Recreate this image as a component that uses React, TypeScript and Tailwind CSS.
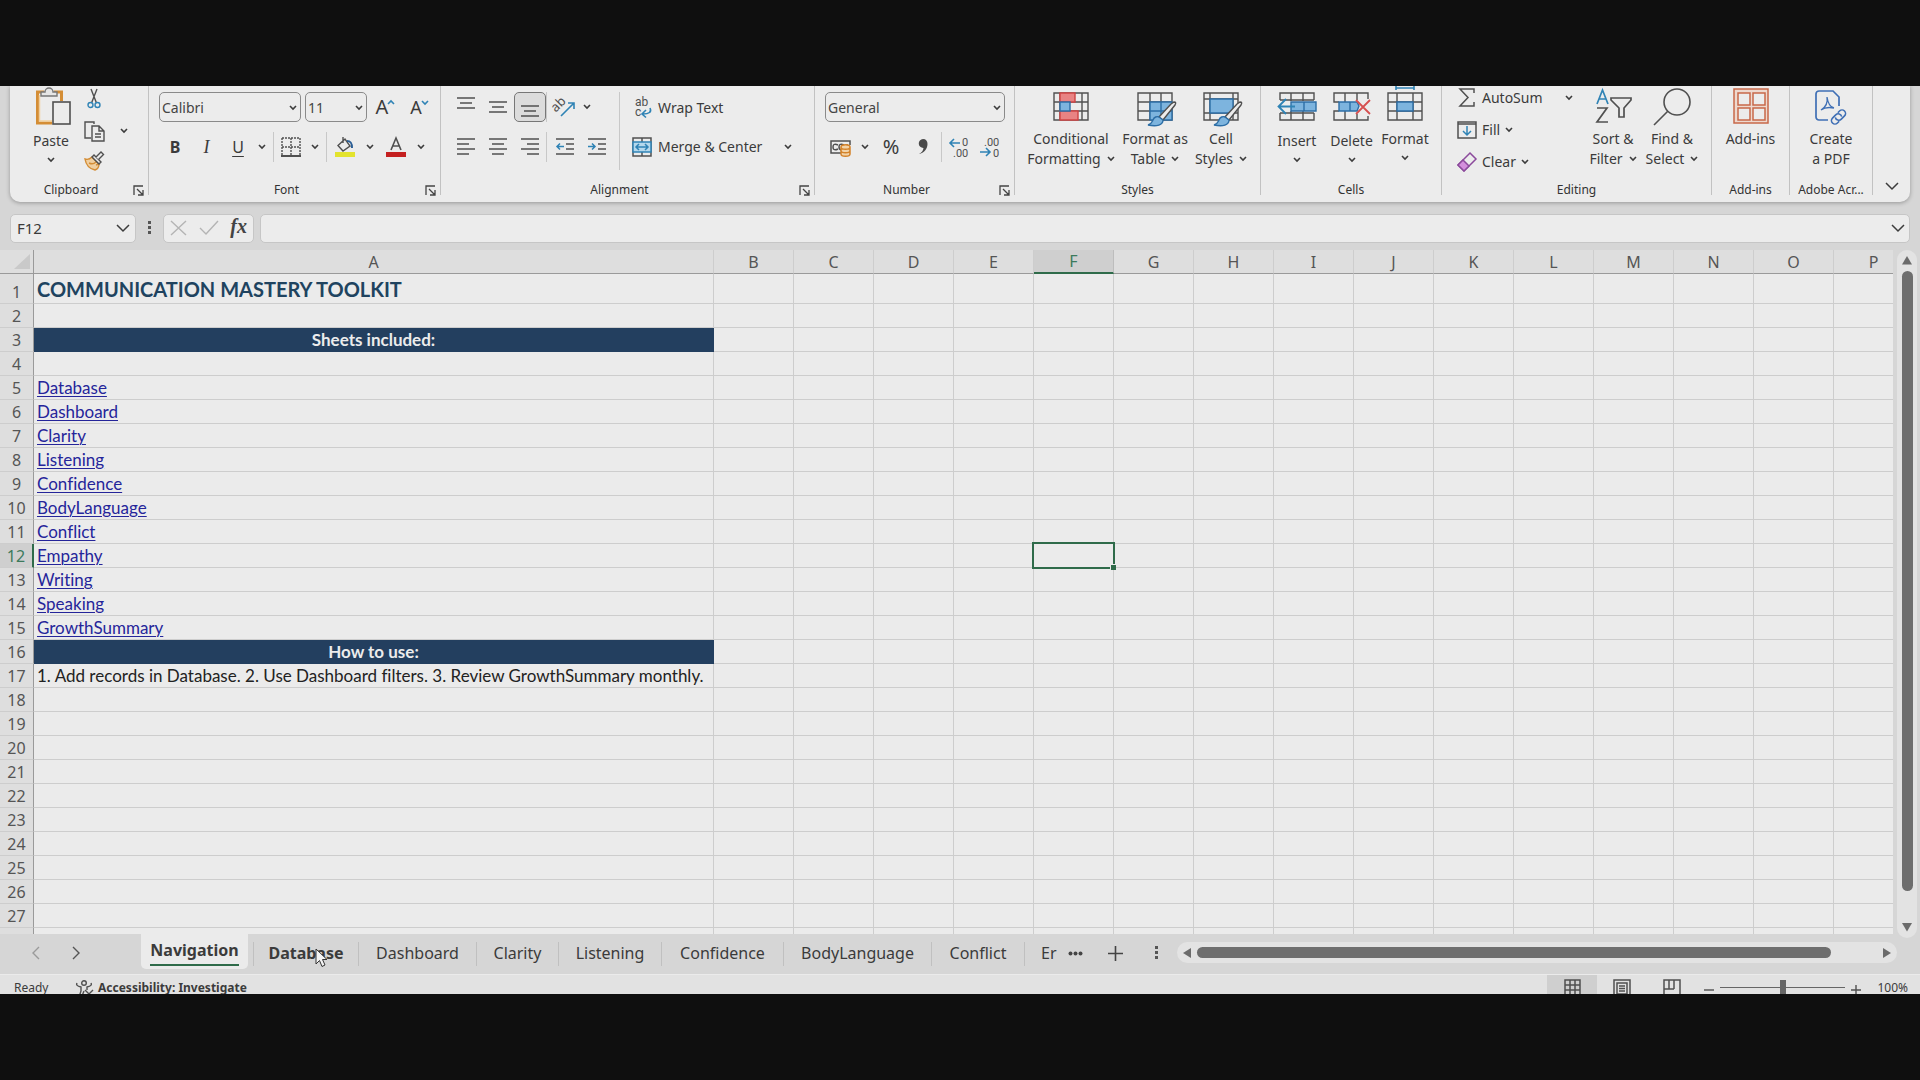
import React from 'react';

const INK = '#505050';
const BLUE = '#2f83b5';
const SKY = '#7db4de';

type IconProps = { w: number; h: number; children: React.ReactNode; stroke?: string; sw?: number; className?: string };

function Icon({ w, h, children, stroke = INK, sw = 1.4, className = '' }: IconProps) {
  return (
    <svg width={w} height={h} viewBox={`0 0 ${w} ${h}`} fill="none" stroke={stroke} strokeWidth={sw} className={`block shrink-0 overflow-visible ${className}`} aria-hidden="true">
      {children}
    </svg>
  );
}

function Chev({ className = '' }: { className?: string }) {
  return (
    <Icon w={8} h={6} stroke="#3c3c3c" sw={1.6} className={className}>
      <path d="M1 1l3 3 3-3" />
    </Icon>
  );
}

function WideChev() {
  return (
    <Icon w={14} h={8} stroke="#3c3c3c" sw={1.5}>
      <path d="M1 1l6 6 6-6" />
    </Icon>
  );
}

/* ---------- ribbon building blocks ---------- */

function Btn({ label, className = 'w-8', children }: { label: string; className?: string; children: React.ReactNode }) {
  return (
    <button type="button" aria-label={label} className={`flex h-[30px] shrink-0 items-center justify-center ${className}`}>
      {children}
    </button>
  );
}

function BigBtn({ className, icon, lines, drop, low }: { className: string; icon: React.ReactNode; lines: string[]; drop?: 'inline' | 'below'; low?: boolean }) {
  return (
    <button type="button" className={`flex shrink-0 flex-col items-center ${className}`}>
      <span className={low ? 'flex h-[45px] flex-col items-center' : 'flex h-[43px] flex-col items-center'}>{icon}</span>
      {lines.map((line, i) => (
        <span key={line} className="flex h-5 items-center gap-1.5 whitespace-nowrap leading-5">
          {line}
          {drop === 'inline' && i === lines.length - 1 && <Chev />}
        </span>
      ))}
      {drop === 'below' && (
        <span className="flex h-[18px] items-center">
          <Chev />
        </span>
      )}
    </button>
  );
}

function Group({ title, className, launcher, children }: { title: string; className: string; launcher?: boolean; children: React.ReactNode }) {
  return (
    <section aria-label={title} className={`flex h-[109px] shrink-0 border-r border-[#c2c2c2] ${className}`}>
      <div className="flex h-[116px] min-w-0 flex-1 flex-col">
        <div className="min-h-0 flex-1">{children}</div>
        <div className={`relative flex h-6 items-center justify-center text-xs leading-4 text-[#333] ${launcher ? 'pr-4' : ''}`}>
          <span className="whitespace-nowrap">{title}</span>
          {launcher && (
            <button type="button" aria-label={`${title} settings`} className="absolute right-1 top-[7px]">
              <Icon w={11} h={11} stroke="#444" sw={1.3}>
                <path d="M1 10V1h9M4 4l5.5 5.5M10 5v5H5" />
              </Icon>
            </button>
          )}
        </div>
      </div>
    </section>
  );
}

function Split({ className = 'h-[30px]' }: { className?: string }) {
  return <span className={`w-px shrink-0 bg-[#c8c8c8] ${className}`} />;
}

function Combo({ label, options, className }: { label: string; options: string[]; className: string }) {
  return (
    <div className={`relative h-[30px] shrink-0 ${className}`}>
      <select aria-label={label} className="h-full w-full appearance-none rounded-[5px] border border-[#8a8a8a] bg-[#ececec] pl-0.5 pt-0.5 text-sm text-[#444]">
        {options.map((o) => (
          <option key={o}>{o}</option>
        ))}
      </select>
      <span className="pointer-events-none absolute right-1 top-[13px]">
        <Chev />
      </span>
    </div>
  );
}

/* ---------- icons ---------- */

function Lines({ rows }: { rows: [number, number, number][] }) {
  return (
    <Icon w={18} h={18} sw={1.5}>
      {rows.map(([y, a, b]) => (
        <path key={y} d={`M${a} ${y}H${b}`} />
      ))}
    </Icon>
  );
}

const PasteIcon = (
  <Icon w={36} h={38} className="ml-1 mt-0.5">
    <path d="M9 4H2.500v31H17M19 4h7.500v9" stroke="#d48d35" strokeWidth="3" />
    <path d="M4.500 7v26H17" stroke="#f1cf9c" strokeWidth="1.500" />
    <path d="M6 8V4h4a4 4 0 0 1 8 0h4v4z" fill="#e6e6e6" stroke="#777" />
    <rect x="18" y="14" width="17" height="22" fill="#ececec" strokeWidth="1.600" />
  </Icon>
);

const ScissorsIcon = (
  <Icon w={14} h={20}>
    <path d="M4 0l5.500 14M10 0L4.500 14" />
    <circle cx="3.500" cy="16" r="2.500" stroke={BLUE} />
    <circle cx="10.500" cy="16" r="2.500" stroke={BLUE} />
  </Icon>
);

const CopyIcon = (
  <Icon w={21} h={21}>
    <path d="M7 17H1V1h9v2" />
    <path d="M8 5h7l5 5v10H8zM15 5v5h5M11 13h6M11 16h6" />
  </Icon>
);

const BrushIcon = (
  <Icon w={21} h={20}>
    <path d="M1 8c3 1 5 0 7-2l7 7c0 3-1 5-4 6C6 18 2 14 1 8z" stroke="#d48d35" fill="#f0cfa0" />
    <path d="M5 12c2 1 5 1 7-1M8 6l7 7-3 1" stroke="#d48d35" />
    <path d="M8 6l2-2 7 7-2 2z" fill="#ececec" />
    <path d="M12 6l5-5 2.500 2.500-5 5" fill="#ececec" />
  </Icon>
);

function GridIcon({ children }: { children?: React.ReactNode }) {
  return (
    <Icon w={36} h={36} className="mt-1.5">
      <path d="M1 1h34v27H1zM1 10h34M1 19h34M13 1v27M24 1v27" />
      {children}
    </Icon>
  );
}

const brush = (
  <>
    <path d="M37 10c2 0 2 1 1 3L26 28l-4-3 12-13z" fill="#ececec" />
    <path d="M22 25l4 3c0 5-6 7-15 5 4-1 4-3 5-5 1-3 4-4 6-3z" fill={SKY} stroke="#2c6ea6" />
  </>
);

const CondIcon = (
  <Icon w={36} h={30} className="mt-1.5">
    <path d="M1 1h34v27H1zM1 10h34M1 19h34M7 1v27M29 1v27" />
    <path d="M7 1h15v9H7zM7 19h18v9H7z" fill="#e88383" stroke="#cf4444" />
    <path d="M7 10h10v9H7z" fill={SKY} stroke="#2c6ea6" />
  </Icon>
);

const TableIcon = (
  <GridIcon>
    <path d="M13 10h22v18H13z" fill={SKY} stroke="#2c6ea6" />
    <path d="M24 10v18M13 19h22" stroke="#2c6ea6" />
    {brush}
  </GridIcon>
);

const CellStylesIcon = (
  <Icon w={36} h={36} className="mt-1.5">
    <path d="M1 1h34v27H1zM1 7h34M1 21h34M7 1v27M30 1v27" />
    <path d="M7 7h23v14H7z" fill={SKY} stroke="#2c6ea6" />
    {brush}
  </Icon>
);

const InsertIcon = (
  <Icon w={40} h={30} className="mt-1.5">
    <path d="M3 8V1h34v7M3 21v7h34v-7M14 1v8M26 1v8M14 19v9M26 19v9M3 8h34M3 21h34" />
    <path d="M14 10h25v9H14z" fill={SKY} stroke="#2c6ea6" />
    <path d="M27 10v9" stroke="#2c6ea6" />
    <path d="M18 14.500H2M9 7l-7.500 7.500L9 22" stroke={BLUE} strokeWidth="1.800" />
  </Icon>
);

const DeleteIcon = (
  <Icon w={38} h={30} className="mt-1.5">
    <path d="M6 10H1V1h34v6M6 19H1v9h34v-4M12 1v9M24 1v7M12 19v9M24 22v6" />
    <path d="M6 10h18l2 4-2 5H6z" fill={SKY} stroke="#2c6ea6" />
    <path d="M17 10v9" stroke="#2c6ea6" />
    <path d="M23 8l14 14M37 8L23 22" stroke="#d65050" strokeWidth="1.800" />
  </Icon>
);

const FormatIcon = (
  <Icon w={36} h={34} className="mt-0.5">
    <path d="M9 0h18M9-2v4M27-2v4" stroke={BLUE} strokeWidth="1.600" />
    <path d="M1 5h34v27H1zM1 14h34M1 23h34M10 5v27M26 5v27" />
    <path d="M10 14h16v9H10z" fill={SKY} stroke="#2c6ea6" />
  </Icon>
);

const SortIcon = (
  <Icon w={37} h={38} className="mt-0.5" sw={1.7}>
    <path d="M2 16L7.500 2 13 16M4 11h7" stroke={BLUE} />
    <path d="M2 20h10L2 34h11" />
    <path d="M16 10h20v2l-7 8v9h-5v-9l-8-8z" />
  </Icon>
);

const FindIcon = (
  <Icon w={38} h={38} className="mt-0.5" sw={1.6}>
    <circle cx="24" cy="14" r="13" />
    <path d="M15 23L1 37" />
  </Icon>
);

const AddinsIcon = (
  <Icon w={36} h={38} className="mt-0.5" stroke="#c7684a" sw={1.5}>
    <rect x="1" y="1" width="34" height="34" fill="#eed9cf" />
    <path d="M5 5h12v12H5zM20 5h12v12H20zM5 20h12v12H5zM20 20h12v12H20z" fill="#ececec" />
  </Icon>
);

const PdfIcon = (
  <Icon w={33} h={37} className="mt-1" stroke="#3f6fb5" sw={1.7}>
    <path d="M13 30H4a3 3 0 0 1-3-3V4a3 3 0 0 1 3-3h14l6 6v9" />
    <path d="M6 20c5-3 7-7 6-13 1 7 3 10 7 11-5-1-9-1-13 2z" strokeWidth="1.300" />
    <g transform="rotate(-45 23.500 27)" strokeWidth="1.600">
      <path d="M21 30.500h-2.500a3.500 3.500 0 0 1 0-7H23a3.500 3.500 0 0 1 3 5.500" />
      <path d="M26 23.500h2.500a3.500 3.500 0 0 1 0 7H24a3.500 3.500 0 0 1-3-5.500" />
    </g>
  </Icon>
);

/* ---------- sheet data ---------- */

const COLS = ['B', 'C', 'D', 'E', 'F', 'G', 'H', 'I', 'J', 'K', 'L', 'M', 'N', 'O', 'P'];
const LINKS = ['Database', 'Dashboard', 'Clarity', 'Listening', 'Confidence', 'BodyLanguage', 'Conflict', 'Empathy', 'Writing', 'Speaking', 'GrowthSummary'];
const ROWS = Array.from({ length: 28 }, (_, i) => i + 1);

function CellA({ row }: { row: number }) {
  if (row === 1) {
    return <td className="border-b border-r border-[#cdcdcd] pl-[3px] text-xl font-bold leading-7 text-[#20435f]">COMMUNICATION MASTERY TOOLKIT</td>;
  }
  if (row === 3 || row === 16) {
    return (
      <td className="border-b border-r border-[#233f5f] bg-[#233f5f] text-center font-bold leading-5 text-[#ececec]">
        {row === 3 ? 'Sheets included:' : 'How to use:'}
      </td>
    );
  }
  const name = LINKS[row - 5];
  return (
    <td className="whitespace-nowrap border-b border-r border-[#cdcdcd] pl-[3px] leading-5 text-[#222]">
      {name && (
        <a href={`#${name}`} className="text-[#25259a] underline decoration-1 underline-offset-2">
          {name}
        </a>
      )}
      {row === 17 && '1. Add records in Database. 2. Use Dashboard filters. 3. Review GrowthSummary monthly.'}
    </td>
  );
}

function Sheet() {
  return (
    <table className="w-[1913px] table-fixed border-separate border-spacing-0 font-['Lato',sans-serif] text-[17px] [font-variant-ligatures:none]">
      <colgroup>
        <col className="w-[34px]" />
        <col className="w-[680px]" />
        {COLS.map((c) => (
          <col key={c} className="w-20" />
        ))}
      </colgroup>
      <thead className="font-['Noto_Sans',sans-serif] text-base text-[#555]">
        <tr className="h-6">
          <th aria-label="Select all" className="border-b border-r border-[#9a9a9a] bg-[#dedede] p-0">
            <Icon w={16} h={15} stroke="none" className="ml-auto mr-[3px]">
              <path d="M16 0v15H0z" fill="#c9c9c9" />
            </Icon>
          </th>
          <th scope="col" className="border-b border-r border-b-[#9a9a9a] border-r-[#cdcdcd] bg-[#dedede] p-0 font-normal leading-5">A</th>
          {COLS.map((c) => (
            <th
              key={c}
              scope="col"
              className={
                c === 'F'
                  ? 'border-b-2 border-r border-b-[#2f6b4a] border-r-[#bdbdbd] bg-[#cfcfcf] p-0 font-normal leading-5 text-[#3c7a5c]'
                  : 'border-b border-r border-b-[#9a9a9a] border-r-[#cdcdcd] bg-[#dedede] p-0 font-normal leading-5'
              }
            >
              {c}
            </th>
          ))}
        </tr>
      </thead>
      <tbody>
        {ROWS.map((r) => (
          <tr key={r} className={r === 1 ? 'h-[30px]' : 'h-6'}>
            <th
              scope="row"
              className={
                r === 12
                  ? "border-b border-r-2 border-b-[#cdcdcd] border-r-[#2f6b4a] bg-[#cfcfcf] p-0 text-center align-bottom font-['Noto_Sans',sans-serif] text-base font-normal leading-[22px] text-[#3c7a5c]"
                  : "border-b border-r border-b-[#cdcdcd] border-r-[#9a9a9a] bg-[#dedede] p-0 text-center align-bottom font-['Noto_Sans',sans-serif] text-base font-normal leading-[22px] text-[#555]"
              }
            >
              {r}
            </th>
            <CellA row={r} />
            {COLS.map((c) => (
              <td key={c} className="relative border-b border-r border-[#cdcdcd] p-0">
                {c === 'F' && r === 12 && (
                  <span className="absolute -bottom-0.5 -left-0.5 -right-0.5 -top-0.5 z-10 border-2 border-[#2f6b4a]">
                    <span className="absolute -bottom-[3px] -right-[3px] h-1.5 w-1.5 border-l border-t border-[#ececec] bg-[#2f6b4a]" />
                  </span>
                )}
              </td>
            ))}
          </tr>
        ))}
      </tbody>
    </table>
  );
}

function Tab({ name, className }: { name: string; className: string }) {
  return (
    <button type="button" className={`my-2 shrink-0 border-l border-[#c0c0c0] pb-0.5 leading-[22px] ${className}`}>
      {name}
    </button>
  );
}

export default function App() {
  return (
    <div className="flex h-screen flex-col overflow-hidden bg-[#0f0f0f] py-[86px] font-['Noto_Sans',sans-serif] text-sm text-[#3b3b3b]">
      <div className="flex min-h-0 flex-1 flex-col overflow-hidden bg-[#d6d6d6]">
        {/* Ribbon */}
        <div className="mx-2.5 flex h-[116px] shrink-0 rounded-b-[10px] bg-[#ececec] shadow-[0_1px_4px_rgba(0,0,0,0.3)]">
          <Group title="Clipboard" className="w-[139px] pl-0" launcher>
            <div className="flex pl-2">
              <BigBtn className="w-[66px]" icon={PasteIcon} lines={['Paste']} drop="below" low />
              <div className="flex flex-col">
                <Btn label="Cut" className="h-[26px] w-5 pb-1">{ScissorsIcon}</Btn>
                <div className="flex items-center">
                  <Btn label="Copy" className="h-8 w-5">{CopyIcon}</Btn>
                  <Btn label="Copy options" className="ml-3.5 w-3"><Chev /></Btn>
                </div>
                <Btn label="Format painter" className="w-5">{BrushIcon}</Btn>
              </div>
            </div>
          </Group>

          <Group title="Font" className="w-[292px]" launcher>
            <div className="flex flex-col gap-2.5 pl-2.5 pt-1.5">
              <div className="flex">
                <Combo label="Font name" options={['Calibri', 'Arial']} className="w-[142px]" />
                <Combo label="Font size" options={['11', '12']} className="ml-1 w-[62px]" />
                <Btn label="Increase font size" className="w-9">
                  <span className="text-xl leading-6">A</span>
                  <Icon w={6} h={16} stroke={BLUE} sw={1.6}><path d="M0 5l3-3 3 3" /></Icon>
                </Btn>
                <Btn label="Decrease font size">
                  <span className="text-lg leading-6">A</span>
                  <Icon w={6} h={16} stroke={BLUE} sw={1.6}><path d="M0 2l3 3 3-3" /></Icon>
                </Btn>
              </div>
              <div className="flex">
                <Btn label="Bold"><span className="text-base font-bold">B</span></Btn>
                <Btn label="Italic" className="w-[31px]"><span className="font-['Liberation_Serif',serif] text-lg italic">I</span></Btn>
                <Btn label="Underline"><span className="text-base underline underline-offset-[3px]">U</span></Btn>
                <Btn label="Underline options" className="w-[15px]"><Chev /></Btn>
                <Split className="ml-1 h-[30px]" />
                <Btn label="Borders" className="w-[34px]">
                  <Icon w={20} h={20} sw={1.4}>
                    <path d="M1 1h18v17M1 1v17M10 1v17M1 10h18" strokeDasharray="2 1" />
                    <path d="M0 19h20" strokeWidth="2" />
                  </Icon>
                </Btn>
                <Btn label="Border options" className="w-[14px]"><Chev /></Btn>
                <Split className="ml-1 h-[30px]" />
                <Btn label="Fill color" className="w-9">
                  <Icon w={20} h={20}>
                    <path d="M3 8.500l7-6.500 5 7-7 5zM8 0v6" />
                    <path d="M12 4c4 0 5 2 5 7" stroke="#2c5f96" strokeWidth="2" />
                    <path d="M0 17.500h20" stroke="#e3e32d" strokeWidth="5" />
                  </Icon>
                </Btn>
                <Btn label="Fill options" className="w-[14px]"><Chev /></Btn>
                <Btn label="Font color" className="ml-1.5 w-[26px]">
                  <Icon w={20} h={20} sw={1.6}>
                    <path d="M5 13L10 1l5 12M7 9h6" />
                    <path d="M0 17.500h20" stroke="#c42020" strokeWidth="5" />
                  </Icon>
                </Btn>
                <Btn label="Font color options" className="ml-1 w-4"><Chev /></Btn>
              </div>
            </div>
          </Group>

          <Group title="Alignment" className="w-[374px]" launcher>
            <div className="flex pl-[9px] pt-1.5">
              <div className="flex flex-col gap-2.5">
                <div className="flex">
                  <Btn label="Top align" className="w-8 pb-1.5"><Lines rows={[[3, 0, 18], [8, 3, 15], [13, 0, 18]]} /></Btn>
                  <Btn label="Middle align"><Lines rows={[[4, 0, 18], [9, 3, 15], [14, 0, 18]]} /></Btn>
                  <Btn label="Bottom align" className="w-8 rounded-[5px] border border-[#777] bg-[#dcdcdc] pt-2"><Lines rows={[[4, 0, 18], [9, 3, 15], [14, 0, 18]]} /></Btn>
                  <Split />
                  <Btn label="Orientation" className="w-[34px]">
                    <Icon w={21} h={20}>
                      <g transform="rotate(-45 6 10)">
                        <text x="-1" y="11" fontSize="13" fill={INK} stroke="none">ab</text>
                      </g>
                      <path d="M7 19L20 6M14 6h6v6" stroke={BLUE} strokeWidth="1.600" />
                    </Icon>
                  </Btn>
                  <Btn label="Orientation options" className="w-3"><Chev /></Btn>
                </div>
                <div className="flex">
                  <Btn label="Align left"><Lines rows={[[1, 0, 18], [6, 0, 12], [11, 0, 18], [16, 0, 12]]} /></Btn>
                  <Btn label="Center"><Lines rows={[[1, 0, 18], [6, 3, 15], [11, 0, 18], [16, 3, 15]]} /></Btn>
                  <Btn label="Align right"><Lines rows={[[1, 0, 18], [6, 6, 18], [11, 0, 18], [16, 6, 18]]} /></Btn>
                  <Split />
                  <Btn label="Decrease indent" className="w-9">
                    <Icon w={18} h={18} sw={1.5}>
                      <path d="M0 1h18M10 6h8M10 11h8M0 16h18" />
                      <path d="M8 8.500H1M4 5.500l-3 3 3 3" stroke={BLUE} />
                    </Icon>
                  </Btn>
                  <Btn label="Increase indent" className="w-7">
                    <Icon w={18} h={18} sw={1.5}>
                      <path d="M0 1h18M10 6h8M10 11h8M0 16h18" />
                      <path d="M0 8.500h7M4 5.500l3 3-3 3" stroke={BLUE} />
                    </Icon>
                  </Btn>
                </div>
              </div>
              <Split className="ml-2 h-[78px]" />
              <div className="flex flex-col gap-2.5 pl-3">
                <button type="button" className="flex h-[30px] items-center gap-1.5 pt-0.5">
                  <Icon w={20} h={20} className="font-['Roboto',sans-serif]">
                    <text x="3" y="8" fontSize="12" fill={INK} stroke="none">ab</text>
                    <text x="3" y="18" fontSize="12" fill={INK} stroke="none">c</text>
                    <path d="M18 10c2 4-1 6-7 6M14 12l-4 4 4 3.500" stroke={BLUE} strokeWidth="1.600" />
                  </Icon>
                  Wrap Text
                </button>
                <div className="flex">
                  <button type="button" className="flex h-[30px] items-center gap-1.5 whitespace-nowrap">
                    <Icon w={20} h={20} sw={1.5}>
                      <path d="M1 1h18v18H1zM10 1v4M10 15v4" />
                      <path d="M1 5h18v10H1z" fill="#b5d8ec" stroke={BLUE} />
                      <path d="M4 10h12M7 7l-3 3 3 3M13 7l3 3-3 3" stroke={BLUE} />
                    </Icon>
                    Merge &amp; Center
                  </button>
                  <Btn label="Merge options" className="ml-[18px] w-4"><Chev /></Btn>
                </div>
              </div>
            </div>
          </Group>

          <Group title="Number" className="w-[200px]" launcher>
            <div className="flex flex-col gap-2.5 pl-2.5 pt-1.5">
              <Combo label="Number format" options={['General', 'Number', 'Currency']} className="w-[180px]" />
              <div className="flex pl-[3px]">
                <Btn label="Accounting format" className="w-[26px]">
                  <Icon w={22} h={20} sw={1.5}>
                    <path d="M20 8V4H1v12h11" />
                    <path d="M8 8c-4-2-5 0-5 2s1 4 5 2M14 8c-4-2-5 0-5 2s1 3 3 3M17 7v2" />
                    <path d="M11 10v7c0 3 9 3 9 0v-7c0-3-9-3-9 0c0 3 9 3 9 0M11 13.500c0 3 9 3 9 0" fill="#f2d3a8" stroke="#d4832a" />
                  </Icon>
                </Btn>
                <Btn label="Accounting options" className="ml-[3px] w-4"><Chev /></Btn>
                <Btn label="Percent style" className="w-9"><span className="text-xl">%</span></Btn>
                <Btn label="Comma style" className="w-7">
                  <Icon w={10} h={16} stroke="none">
                    <path d="M5 0a4.500 4.500 0 1 0 .5 9C5 12 4 13.500 1 15c5-1 8.500-5 8.500-10C9.500 2 8 0 5 0z" fill="#4a4a4a" />
                  </Icon>
                </Btn>
                <Split className="ml-1 h-[30px]" />
                <Btn label="Increase decimal" className="w-[34px]">
                  <Icon w={20} h={21} stroke={BLUE} className="font-['Roboto',sans-serif]">
                    <text x="13" y="9" fontSize="11" fill={INK} stroke="none">0</text>
                    <text x="4" y="20" fontSize="11" fill={INK} stroke="none">.00</text>
                    <path d="M11 6H1M5 2L1 6l4 4" strokeWidth="1.600" />
                  </Icon>
                </Btn>
                <Btn label="Decrease decimal" className="w-7">
                  <Icon w={20} h={21} stroke={BLUE} className="font-['Roboto',sans-serif]">
                    <text x="4" y="9" fontSize="11" fill={INK} stroke="none">.00</text>
                    <text x="13" y="20" fontSize="11" fill={INK} stroke="none">0</text>
                    <path d="M0 15h10M6 11l4 4-4 4" strokeWidth="1.600" />
                  </Icon>
                </Btn>
              </div>
            </div>
          </Group>

          <Group title="Styles" className="w-[246px]">
            <div className="flex pl-2">
              <BigBtn className="w-[96px]" icon={CondIcon} lines={['Conditional', 'Formatting']} drop="inline" />
              <BigBtn className="w-[72px]" icon={TableIcon} lines={['Format as', 'Table']} drop="inline" />
              <BigBtn className="w-[60px]" icon={CellStylesIcon} lines={['Cell', 'Styles']} drop="inline" />
            </div>
          </Group>

          <Group title="Cells" className="w-[181px]">
            <div className="flex items-start pl-2">
              <BigBtn className="w-[56px]" icon={InsertIcon} lines={['Insert']} drop="below" low />
              <BigBtn className="w-[53px]" icon={DeleteIcon} lines={['Delete']} drop="below" low />
              <BigBtn className="w-[54px]" icon={FormatIcon} lines={['Format']} drop="below" />
            </div>
          </Group>

          <Group title="Editing" className="w-[270px]">
            <div className="flex pl-[15px]">
              <div className="flex w-[128px] flex-col">
                <div className="flex h-7 items-center pb-1">
                  <button type="button" className="flex items-center gap-[5px]">
                    <Icon w={20} h={20} sw={1.5}>
                      <path d="M17 5V1H3l8 8.500L3 18h14v-4" />
                    </Icon>
                    AutoSum
                  </button>
                  <Btn label="AutoSum options" className="ml-[18px] w-4"><Chev /></Btn>
                </div>
                <button type="button" className="flex h-8 items-center gap-[5px]">
                  <Icon w={20} h={18} sw={1.5}>
                    <path d="M1 1h18v16H1zM1 3h18" />
                    <path d="M10 5v9M6 10l4 4 4-4" stroke={BLUE} />
                  </Icon>
                  Fill
                  <Chev />
                </button>
                <button type="button" className="flex h-8 items-center gap-[5px]">
                  <Icon w={20} h={20} stroke="#8c4a9c" sw={1.5}>
                    <path d="M13 1l6 6L7 19l-6-6z" />
                    <path d="M6 8l6 6-5 5-6-6z" fill="#d48fdc" />
                  </Icon>
                  Clear
                  <Chev />
                </button>
              </div>
              <BigBtn className="w-[56px]" icon={SortIcon} lines={['Sort &', 'Filter']} drop="inline" />
              <BigBtn className="w-[62px]" icon={FindIcon} lines={['Find &', 'Select']} drop="inline" />
            </div>
          </Group>

          <Group title="Add-ins" className="w-[78px]">
            <BigBtn className="w-full" icon={AddinsIcon} lines={['Add-ins']} />
          </Group>

          <Group title="Adobe Acr..." className="w-[83px]">
            <BigBtn className="w-full" icon={PdfIcon} lines={['Create', 'a PDF']} />
          </Group>

          <div className="flex flex-1 items-end justify-center pb-2.5">
            <button type="button" aria-label="Ribbon display options" className="p-0.5"><WideChev /></button>
          </div>
        </div>

        {/* Formula bar */}
        <div className="flex h-12 shrink-0 items-center px-2.5 pt-1">
          <div className="flex h-[29px] w-[126px] items-center rounded-[5px] border border-[#c6c6c6] bg-[#ececec] pr-[5px]">
            <input aria-label="Name box" defaultValue="F12" className="min-w-0 flex-1 bg-transparent pl-1.5 text-[15px] leading-5 outline-none" />
            <button type="button" aria-label="Name box list"><WideChev /></button>
          </div>
          <Icon w={4} h={14} stroke="none" className="ml-3">
            <path d="M0 0h3v3H0zM0 5h3v3H0zM0 10h3v3H0z" fill="#555" />
          </Icon>
          <div className="ml-[11px] flex h-[29px] w-[91px] items-center justify-between rounded-[5px] border border-[#c6c6c6] bg-[#ececec] px-1.5">
            <button type="button" aria-label="Cancel">
              <Icon w={17} h={16} stroke="#b4b4b4"><path d="M1 1l15 14M16 1L1 15" /></Icon>
            </button>
            <button type="button" aria-label="Enter">
              <Icon w={20} h={16} stroke="#b4b4b4"><path d="M1 8l6 6L19 1" /></Icon>
            </button>
            <button type="button" aria-label="Insert function" className="pb-1 font-['Liberation_Serif',serif] text-xl font-bold italic leading-6 text-[#444]">fx</button>
          </div>
          <div className="ml-1.5 flex h-[29px] flex-1 items-center rounded-[5px] border border-[#c6c6c6] bg-[#ececec] pr-1">
            <input aria-label="Formula bar" className="min-w-0 flex-1 bg-transparent px-2 outline-none" />
            <button type="button" aria-label="Expand formula bar"><WideChev /></button>
          </div>
        </div>

        {/* Worksheet */}
        <div className="flex min-h-0 flex-1">
          <div className="min-w-0 flex-1 overflow-hidden bg-[#ebebeb]">
            <Sheet />
          </div>
          <div className="-mb-1 ml-1 mr-[3px] flex w-5 shrink-0 flex-col items-center rounded-[10px] bg-[#e3e3e3] py-1.5">
            <Icon w={10} h={9} stroke="none"><path d="M5 0l5 8.500H0z" fill="#6b6b6b" /></Icon>
            <div className="mb-8 mt-1.5 w-[11px] flex-1 rounded-full bg-[#6e6e6e]" />
            <Icon w={10} h={9} stroke="none"><path d="M5 8.500L0 0h10z" fill="#6b6b6b" /></Icon>
          </div>
        </div>

        {/* Sheet tabs */}
        <div className="flex h-10 shrink-0 text-base">
          <Btn label="Previous sheet" className="ml-5 h-[38px] w-8">
            <Icon w={8} h={14} stroke="#9a9a9a"><path d="M7 1L1 7l6 6" /></Icon>
          </Btn>
          <Btn label="Next sheet" className="ml-2 h-[38px] w-8">
            <Icon w={8} h={14} stroke="#555"><path d="M1 1l6 6-6 6" /></Icon>
          </Btn>
          <div className="ml-[49px] flex h-[35px] w-[107px] shrink-0 justify-center rounded-b-[5px] bg-[#ebebeb]">
            <button type="button" className="mb-[3px] border-b-2 border-[#2f6b4a] pt-0.5 font-bold leading-6">Navigation</button>
          </div>
          <div className="relative ml-[5px] flex shrink-0">
            <Tab name="Database" className="w-[105px] font-bold" />
            <Icon w={13} h={20} sw={1} stroke="#333" className="absolute left-[62px] top-[14px]">
              <path d="M1 1v15l3.500-3.500L7 18.500l3-1.500-2.500-5.500H12z" fill="#f4f4f4" />
            </Icon>
          </div>
          <Tab name="Dashboard" className="w-[118px]" />
          <Tab name="Clarity" className="w-[82px]" />
          <Tab name="Listening" className="w-[103px]" />
          <Tab name="Confidence" className="w-[122px]" />
          <Tab name="BodyLanguage" className="w-[148px]" />
          <Tab name="Conflict" className="w-[93px]" />
          <Tab name="Er" className="w-8 pl-4 text-left" />
          <Btn label="More sheets" className="ml-[3px] h-[38px] w-8">
            <Icon w={15} h={5} stroke="none">
              <circle cx="2.500" cy="2.500" r="2" fill="#444" />
              <circle cx="7.500" cy="2.500" r="2" fill="#444" />
              <circle cx="12.500" cy="2.500" r="2" fill="#444" />
            </Icon>
          </Btn>
          <Btn label="New sheet" className="ml-1.5 h-[38px] w-9">
            <Icon w={15} h={15} stroke="#444" sw={1.6}><path d="M7.500 0v15M0 7.500h15" /></Icon>
          </Btn>
          <Icon w={4} h={14} stroke="none" className="ml-[22px] mt-3">
            <path d="M0 0h3v3H0zM0 5h3v3H0zM0 10h3v3H0z" fill="#555" />
          </Icon>
          <div className="ml-[18px] mr-[23px] mt-2 flex h-[21px] flex-1 items-center rounded-full bg-[#e3e3e3] px-1.5">
            <Icon w={8} h={10} stroke="none"><path d="M0 5l8-5v10z" fill="#6b6b6b" /></Icon>
            <div className="ml-1.5 mr-[52px] h-[11px] flex-1 rounded-full bg-[#6e6e6e]" />
            <Icon w={8} h={10} stroke="none"><path d="M8 5L0 0v10z" fill="#6b6b6b" /></Icon>
          </div>
        </div>

        {/* Status bar */}
        <div className="flex h-5 shrink-0 overflow-hidden border-t border-[#ebebeb] bg-[#e2e2e2] pl-3.5 pr-3 text-xs">
          <span className="w-[61px] pt-[5px] leading-4">Ready</span>
          <button type="button" className="flex items-start gap-1 pt-1 font-bold">
            <Icon w={19} h={20} sw={1.4} className="mt-px">
              <circle cx="9" cy="3" r="2.300" />
              <path d="M2 3c-1 2 0 3 4 4v4l-2 6M16 3c1 2 0 3-4 4v3M9 11l-2 5M10 10l8 8M18 10l-8 8" />
            </Icon>
            <span className="leading-[18px]">Accessibility: Investigate</span>
          </button>
          <div className="ml-auto flex">
            <Btn label="Normal view" className="h-8 w-[50px] bg-[#cfcfcf] pb-1">
              <Icon w={17} h={19} sw={1.5}><path d="M1 1h15v17H1zM6 1v17M11 1v17M1 6h15M1 11h15" /></Icon>
            </Btn>
            <Btn label="Page layout view" className="h-8 w-[50px] pb-1">
              <Icon w={18} h={19} sw={1.5}><path d="M1 1h16v17H1zM4 4h10v11H4zM6 7h6M6 9.500h6M6 12h6" /></Icon>
            </Btn>
            <Btn label="Page break view" className="h-8 w-[50px] pb-1">
              <Icon w={18} h={19} sw={1.5}><path d="M1 1h16v17H1zM6 1v9M11 1v9M1 10h10" /></Icon>
            </Btn>
            <Btn label="Zoom out" className="ml-1.5 h-6 w-3">
              <Icon w={10} h={10}><path d="M0 5h10" /></Icon>
            </Btn>
            <input
              type="range"
              aria-label="Zoom"
              min={0}
              max={100}
              defaultValue={50}
              className="ml-[5px] h-6 w-[125px] appearance-none bg-transparent [&::-webkit-slider-runnable-track]:h-px [&::-webkit-slider-runnable-track]:bg-[#666] [&::-webkit-slider-thumb]:-mt-[7px] [&::-webkit-slider-thumb]:h-[15px] [&::-webkit-slider-thumb]:w-1.5 [&::-webkit-slider-thumb]:appearance-none [&::-webkit-slider-thumb]:bg-[#666]"
            />
            <Btn label="Zoom in" className="ml-[5px] h-6 w-3">
              <Icon w={10} h={10}><path d="M0 5h10M5 0v10" /></Icon>
            </Btn>
            <span className="ml-[15px] pt-[5px] leading-4">100%</span>
          </div>
        </div>
      </div>
    </div>
  );
}
